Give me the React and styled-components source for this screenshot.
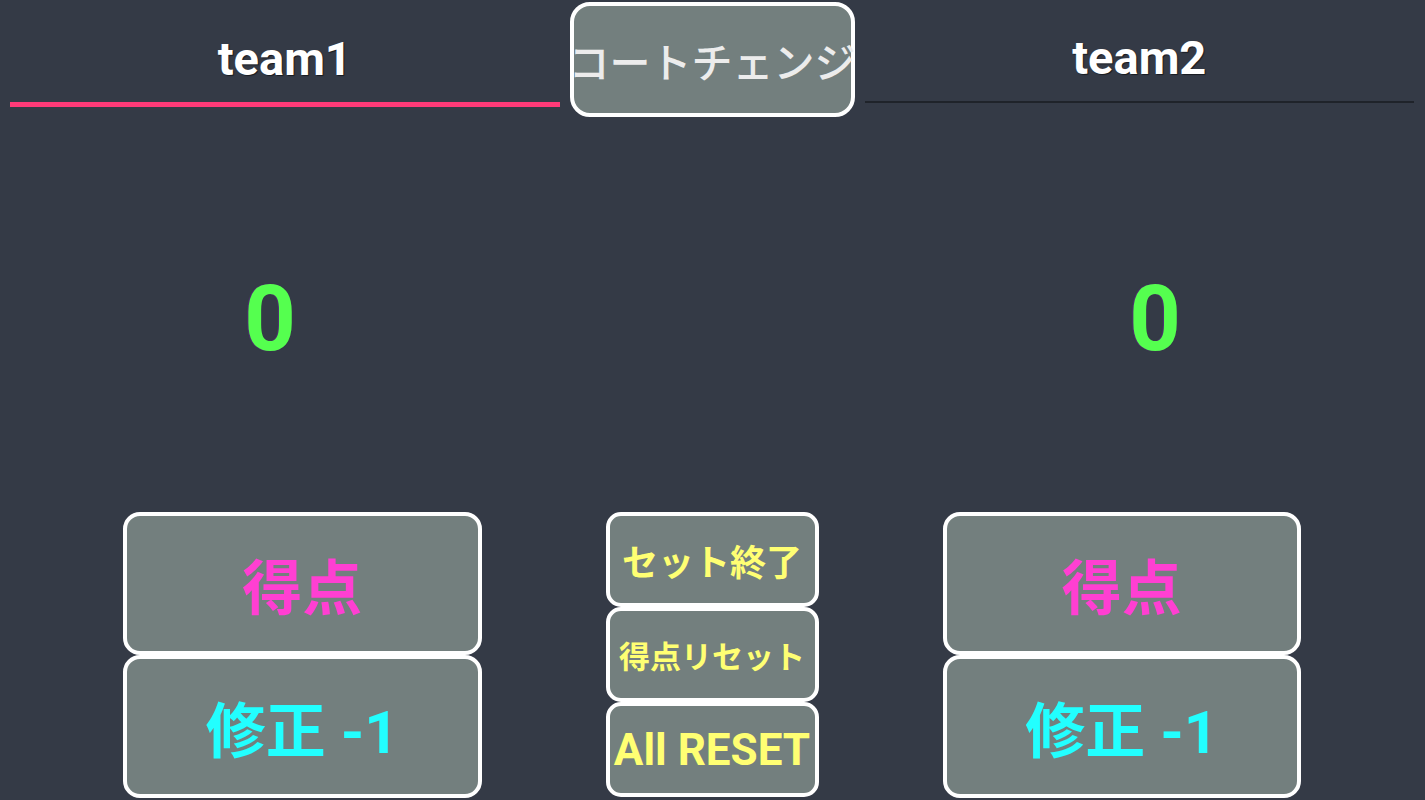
import React from 'react'
import styled, { createGlobalStyle } from 'styled-components'

const GlobalStyle = createGlobalStyle`
  body {
    margin: 0;
    background: #343a46;
    font-family: Roboto, "Noto Sans CJK JP", sans-serif;
    overflow: hidden;
  }
`

function App() {
  return (
    <Page>
      <GlobalStyle />
      <Header>
        <Tab active>team1</Tab>
        <ChangeButton>コートチェンジ</ChangeButton>
        <Tab>team2</Tab>
      </Header>
      <Scores>
        <Score>0</Score>
        <div />
        <Score>0</Score>
      </Scores>
      <Controls>
        <Stack>
          <BigButton color="#ff3fd2">得点</BigButton>
          <BigButton color="#22ffff">修正 -1</BigButton>
        </Stack>
        <Stack>
          <SmallButton size={36}>セット終了</SmallButton>
          <SmallButton size={31}>得点リセット</SmallButton>
          <SmallButton size={44} latin>All RESET</SmallButton>
        </Stack>
        <Stack>
          <BigButton color="#ff3fd2">得点</BigButton>
          <BigButton color="#22ffff">修正 -1</BigButton>
        </Stack>
      </Controls>
    </Page>
  )
}

export default App

const Page = styled.div`
    height: 800px;
    display: flex;
    flex-direction: column;
    background: #343a46;
`

const Header = styled.div`
    display: grid;
    grid-template-columns: 1fr 285px 1fr;
    column-gap: 10px;
    padding: 2px 11px 0 10px;
    align-items: start;
`

const Tab = styled.div`
    height: ${props => props.active ? '88px' : '87px'};
    padding-top: 14px;
    display: flex;
    justify-content: center;
    align-items: center;
    margin-top: -2px;
    color: #ffffff;
    font-size: 47px;
    font-weight: 700;
    text-shadow: 1px 1px 1px rgba(0, 0, 0, 0.55);
    border-bottom: ${props => props.active ? '5px solid #ff3a78' : '2px solid #1f232a'};
`

const ChangeButton = styled.div`
    box-sizing: border-box;
    height: 115px;
    background: #737f7e;
    border: 4px solid #ffffff;
    border-radius: 20px;
    display: flex;
    justify-content: center;
    align-items: center;
    white-space: nowrap;
    color: #ececec;
    font-family: "Noto Sans CJK JP", sans-serif;
    font-size: 41px;
    font-weight: 500;
`

const Scores = styled.div`
    flex: 1;
    display: grid;
    grid-template-columns: 540px 1fr 540px;
    align-items: center;
    padding-top: 11px;
`

const Score = styled.div`
    text-align: center;
    color: #55ff4f;
    font-size: 90px;
    font-weight: 700;
    line-height: 1;
    text-shadow: -1px 0 1px rgba(110, 40, 160, 0.5);
`

const Controls = styled.div`
    display: grid;
    grid-template-columns: 1fr 213px 1fr;
    column-gap: 124px;
    padding: 0 124px 2px 123px;
`

const Stack = styled.div`
    display: flex;
    flex-direction: column;
`

const ButtonBase = styled.div`
    box-sizing: border-box;
    background: #737f7e;
    border: 4px solid #ffffff;
    border-radius: 17px;
    display: flex;
    justify-content: center;
    align-items: center;
    white-space: nowrap;
    font-weight: 700;
`

const BigButton = styled(ButtonBase)`
    height: 143px;
    color: ${props => props.color};
    font-size: 60px;
`

const SmallButton = styled(ButtonBase)`
    height: 95px;
    color: #ffff73;
    font-size: ${props => props.size}px;
    font-family: ${props => props.latin ? 'Roboto, sans-serif' : '"Noto Sans CJK JP", sans-serif'};
    border-radius: 15px;
`
